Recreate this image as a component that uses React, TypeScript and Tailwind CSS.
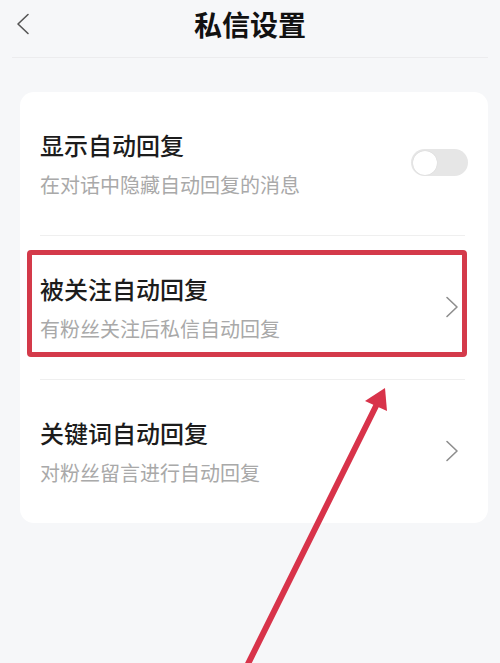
type Row = {
  title: string;
  desc: string;
  kind: "toggle" | "link";
  marked?: boolean;
};

const rows: Row[] = [
  { title: "显示自动回复", desc: "在对话中隐藏自动回复的消息", kind: "toggle" },
  { title: "被关注自动回复", desc: "有粉丝关注后私信自动回复", kind: "link", marked: true },
  { title: "关键词自动回复", desc: "对粉丝留言进行自动回复", kind: "link" },
];

function Toggle() {
  return (
    <div className="w-[57px] h-[27px] rounded-full bg-[#e6e6e6] flex items-center px-[2px]">
      <div className="w-[24px] h-[24px] rounded-full bg-white shadow-[0_0_1px_rgba(0,0,0,0.15)]" />
    </div>
  );
}

function Chevron({ flip, className }: { flip?: boolean; className?: string }) {
  return (
    <svg width="14" height="22" viewBox="0 0 14 22" className={className} fill="none">
      <path
        d={flip ? "M12 1.5 L2 11 L12 20.5" : "M2 1.5 L12 11 L2 20.5"}
        stroke="currentColor"
        strokeWidth="1.6"
        strokeLinecap="round"
        strokeLinejoin="round"
      />
    </svg>
  );
}

export default function App() {
  return (
    <div
      className="relative w-[500px] h-[663px] overflow-hidden bg-[#f6f7f9]"
      style={{ fontFamily: '"Noto Sans CJK SC", "Noto Sans", sans-serif' }}
    >
      {/* header */}
      <div className="mx-3 h-[58px] border-b border-[#ececee] flex items-center relative">
        <Chevron flip className="text-[#555] ml-[4px] mb-[10px]" />
        <h1 className="absolute left-0 right-0 text-center top-[4px] text-[28px] leading-[40px] font-bold text-[#111]">
          私信设置
        </h1>
      </div>

      {/* card */}
      <div className="ml-[20px] mr-[12px] mt-[34px] bg-white rounded-[14px]">
        {rows.map((row, i) => (
          <div key={row.title}>
            {i > 0 && <div className="h-px bg-[#efefef] ml-[20px] mr-[23px]" />}
            <div className="relative h-[143px] pl-[20px] pr-[20px] flex items-center justify-between">
              <div className="flex flex-col gap-[12px]">
                <span className="text-[24px] leading-[30px] font-medium text-[#1c1c1c]">{row.title}</span>
                <span className="text-[20px] leading-[26px] text-[#a9a9a9]">{row.desc}</span>
              </div>
              {row.kind === "toggle" ? (
                <div className="mt-[-2px]">
                  <Toggle />
                </div>
              ) : (
                <Chevron className="text-[#8e8e8e] mr-[9px] mt-[-2px]" />
              )}
              {row.marked && (
                <div className="absolute left-[7px] top-[14px] w-[440px] h-[107px] border-[5px] border-[#d43a4a] rounded-[4px]" />
              )}
            </div>
          </div>
        ))}
      </div>

      {/* annotation arrow */}
      <svg className="absolute inset-0 pointer-events-none" width="500" height="663" viewBox="0 0 500 663">
        <line x1="240" y1="680" x2="377" y2="404" stroke="#d8334a" strokeWidth="6" strokeLinecap="round" />
        <polygon points="385,388 365,401 387,411" fill="#d8334a" />
      </svg>
    </div>
  );
}
